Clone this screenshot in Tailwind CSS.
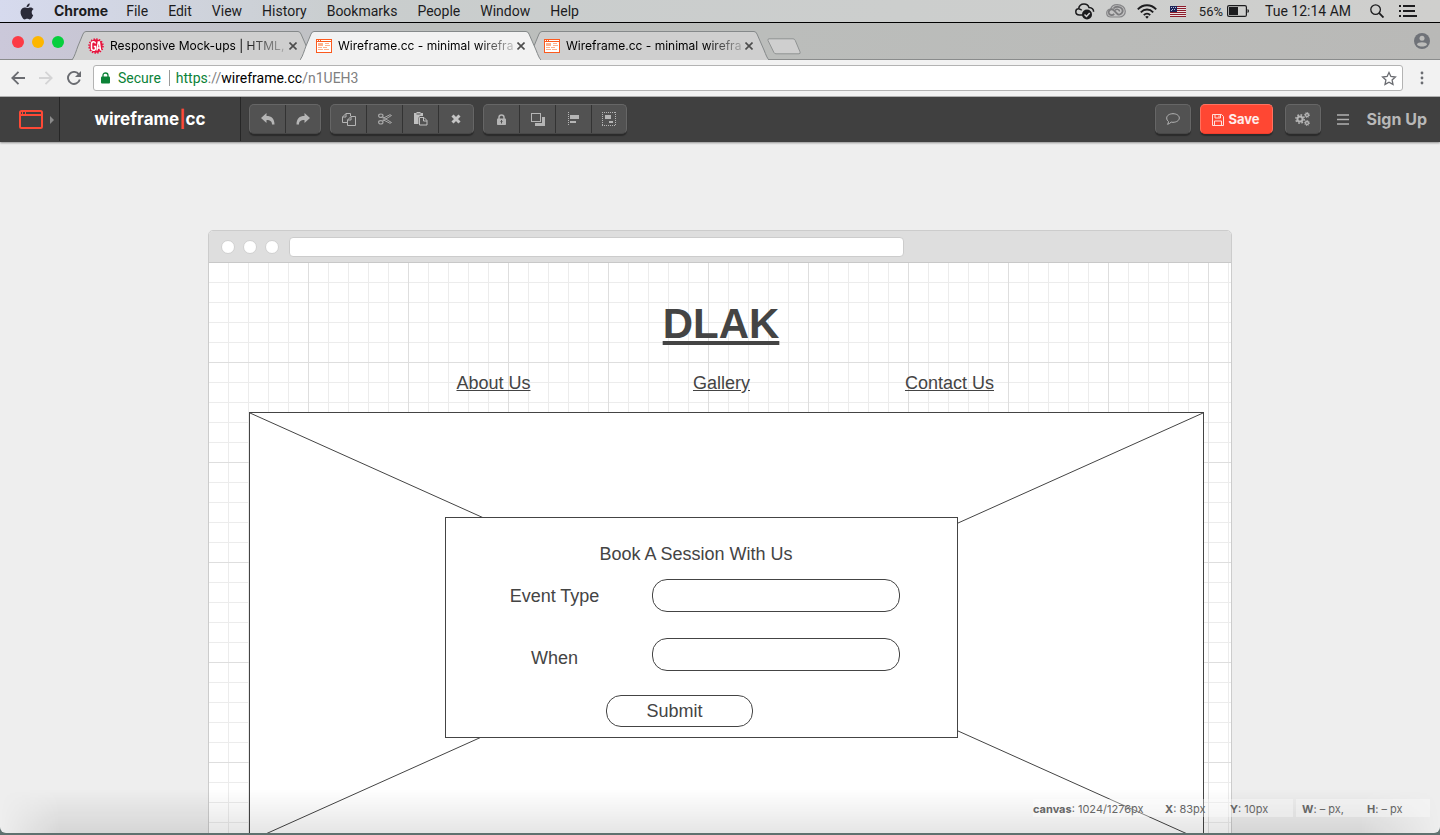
<!DOCTYPE html>
<html lang="en">
<head>
<meta charset="utf-8">
<title>Wireframe.cc - minimal wireframing tool</title>
<script src="https://cdn.jsdelivr.net/npm/@tailwindcss/browser@4"></script>
</head>
<body class="h-screen overflow-hidden bg-[#5f716f] font-['Roboto',sans-serif]">

<svg class="hidden" aria-hidden="true">
  <symbol id="wf" viewBox="0 0 16 14">
    <rect x=".5" y=".5" width="15" height="13" fill="#fff" stroke="#fb5a1e"/>
    <path d="M0 0h16v3H0z" fill="#fb5a1e"/><path d="M1 1h1v1H1zM3 1h1v1H3zM5 1h10v1H5z" fill="#fff"/>
    <path d="M2 4h5v3H2zM9 4h4v1H9zM9 6h5v1H9zM2 8h4v1H2zM7 8h4v1H7zM2 10h5v1H2zM8 10h5v1H8z" fill="#fdb08d"/>
  </symbol>
  <symbol id="close" viewBox="0 0 8 8"><path d="M.5 .5l7 7M7.500 .5l-7 7" fill="none" stroke="#4c4c4c" stroke-width="1.600"/></symbol>
  <symbol id="tab" viewBox="0 0 241 29"><path d="M0 29C3 25 4 20 6 15L11 3Q12 .5 14 .5H226Q228 .5 229 3L236 19C238 24 239 27 241 29" stroke="#85898a"/></symbol>
</svg>

<div class="flex h-[calc(100vh-2px)] flex-col overflow-hidden rounded-b-md bg-[#eee]">

  <!-- System menu bar -->
  <header class="flex h-[23px] shrink-0 items-center border-b border-black bg-linear-to-r from-[#d6daee] via-[#c9cdcd] via-25% to-[#cfcfcd] text-[14px] leading-none text-[#1c1c1e]">
    <nav aria-label="System menu" class="flex items-center gap-5 pl-5">
      <a href="#" aria-label="Apple"><svg width="14" height="17" viewBox="0 0 14 17" fill="#2a2a38"><path d="M9.700.500c.1 1.100-.3 2-.9 2.700-.6.700-1.500 1.200-2.300 1.100-.1-1 .3-1.900.9-2.600C8 1 9 .500 9.700.500zM13.200 12.300c-.400.900-.600 1.300-1.100 2.100-.7 1.100-1.500 2-2.500 2-.9 0-1.200-.6-2.400-.6s-1.600.6-2.400.6c-1 0-1.800-1-2.500-2C.400 11.600 0 8.200 1.300 6.400c.8-1.300 2.100-2 3.300-2 1.200 0 2 .7 3 .7s1.600-.7 3-.7c1 0 2.200.6 3 1.600-2.600 1.500-2.200 5.200-.4 6.300z"/></svg></a>
      <a href="#" class="-mr-0.5 font-['Inter',sans-serif] font-bold">Chrome</a>
      <a href="#">File</a>
      <a href="#">Edit</a>
      <a href="#">View</a>
      <a href="#">History</a>
      <a href="#">Bookmarks</a>
      <a href="#">People</a>
      <a href="#">Window</a>
      <a href="#">Help</a>
    </nav>
    <div class="ml-auto flex items-center pr-[23px]">
      <svg class="mr-[11px]" width="20" height="18" viewBox="0 0 20 18"><path d="M8 13H4.500C2 13 .8 11.400.8 9.800c0-1.600 1.200-3 2.800-3C4 4 6 1.900 9 1.900c2.600 0 4.400 1.500 5 3.600 2.800.2 4.600 2 4.600 4.200" fill="none" stroke="#1c1c1e" stroke-width="1.500"/><path d="M4 7c1.300 0 2 .5 2.700 1.300" fill="none" stroke="#1c1c1e" stroke-width="1.300"/><circle cx="12" cy="12.500" r="5" fill="#1c1c1e"/><path d="M9.500 12.500l2 2 3.200-3.600" fill="none" stroke="#d0d0d0" stroke-width="1.500"/></svg>
      <svg class="mr-[11px]" width="20" height="14" viewBox="0 0 20 14" fill="none"><path d="M5 13C2.300 13 .7 11.300.7 9S2.500 5 4.700 5C5.500 2.300 8 .7 11 .7c4.700 0 8.300 2.500 8.300 6.500 0 3.300-2.500 5.800-5.800 5.800z" fill="#c4c4c4" stroke="#858587" stroke-width="1.200"/><path d="M12 10.500L7.800 6.300C5.500 4 2.600 6 2.700 8.400c.2 2.700 3.500 3.700 5.500 1.500M7.500 4.500C9.500 2 14.500 2.200 16.300 5.200c1.400 3.200-1.800 6.500-4.800 4.900" stroke="#7c7c7e" stroke-width="1.800"/><path d="M9 6.500c1.500-2 4.800-1.200 4.500 1" stroke="#7c7c7e" stroke-width="1.500"/></svg>
      <svg class="mr-[13px]" width="20" height="15" viewBox="0 0 20 15" fill="none" stroke="#1c1c1e" stroke-width="1.900"><path d="M.8 5.300C6-.2 14-.2 19.200 5.300M3.800 8.300c3.600-3.700 8.800-3.700 12.400 0M6.800 11.200c1.900-1.900 4.500-1.900 6.400 0"/><path d="M8.200 12.700L10 14.800l1.800-2.100c-1.100-1-2.500-1-3.600 0z" fill="#1c1c1e" stroke="none"/></svg>
      <svg class="mr-[13px]" width="16" height="11" viewBox="0 0 16 11"><path d="M0 0h16v11H0z" fill="#e9e0e2"/><path d="M0 0h16v1H0zM0 2h16v1H0zM0 4h16v1H0zM0 6h16v1H0zM0 8h16v1H0zM0 10h16v1H0z" fill="#8b1c2b"/><path d="M0 0h7v6H0z" fill="#1d2559"/><path d="M1 1h1v1H1zM3 1h1v1H3zM5 1h1v1H5zM2 3h1v1H2zM4 3h1v1H4zM1 4h1v1H1z" fill="#b9bdd6"/></svg>
      <span class="mr-1 text-[13px]">56%</span>
      <svg class="mr-[15px]" width="23" height="12" viewBox="0 0 23 12"><rect x=".6" y=".6" width="18.800" height="10.800" rx="1.500" fill="none" stroke="#1c1c1e" stroke-width="1.200"/><path d="M2 2h9v8H2z" fill="#1c1c1e"/><path d="M20.500 4c2 .8 2 3.200 0 4z" fill="#1c1c1e"/></svg>
      <span class="mr-[19px]">Tue 12:14 AM</span>
      <button type="button" aria-label="Search" class="mr-[15px]"><svg width="14" height="14" viewBox="0 0 14 14" fill="none" stroke="#1c1c1e"><circle cx="5.600" cy="5.600" r="4.800" stroke-width="1.300"/><path d="M9.200 9.200l4.300 4.300" stroke-width="1.800"/></svg></button>
      <button type="button" aria-label="Notifications"><svg width="18" height="12" viewBox="0 0 18 12" fill="#1c1c1e"><path d="M0 0h2v2H0zM4 0h12v2H4zM0 5h2v2H0zM4 5h12v2H4zM0 10h2v2H0zM4 10h14v2H4z" /></svg></button>
    </div>
  </header>

  <!-- Tab strip -->
  <div class="flex h-[37px] shrink-0 items-end border-b border-[#8a8c8c] bg-linear-to-r from-[#cbc8da] via-[#bcbfbd] via-30% to-[#b9b9b7]">
    <div class="mb-[11px] ml-3 flex w-[60px] shrink-0 gap-2">
      <button type="button" aria-label="Close window" class="size-3 rounded-full bg-[#fc3b46]"></button>
      <button type="button" aria-label="Minimise window" class="size-3 rounded-full bg-[#fdb600]"></button>
      <button type="button" aria-label="Zoom window" class="size-3 rounded-full bg-[#06cf3d]"></button>
    </div>
    <div role="tablist" class="-mb-px flex font-['Inter',sans-serif] text-[12px] text-black">
      <div role="tab" aria-selected="false" class="relative flex h-[29px] w-[241px] items-center pr-4 pl-4">
        <svg class="absolute inset-0 size-full fill-[#cfcfcf]" aria-hidden="true"><use href="#tab"/></svg>
        <svg class="relative mr-1.5 shrink-0" width="16" height="16" viewBox="0 0 16 16"><circle cx="8" cy="8" r="6.700" fill="#e8123c"/><circle cx="8" cy="8" r="7" fill="none" stroke="#e8123c" stroke-width="1.600" stroke-dasharray="1.400 1.350"/><path d="M7.500 5.500C7.300 3 3.500 3 3.500 6v4c0 3 4 3 4 .5V8.500H5.800M9 12.500L10.300 4h1L12.600 12.500M9.500 10h2.600" fill="none" stroke="#fff" stroke-width="1.500"/></svg>
        <a href="#" class="relative shrink-0 whitespace-nowrap [mask-image:linear-gradient(to_right,black_75%,rgba(0,0,0,0.2))]">Responsive Mock-ups | HTML,</a>
        <button type="button" aria-label="Close tab" class="relative ml-auto"><svg width="8" height="8"><use href="#close"/></svg></button>
      </div>
      <div role="tab" aria-selected="true" class="relative z-10 -ml-[13px] flex h-[29px] w-[241px] items-center pr-4 pl-4">
        <svg class="absolute inset-0 size-full fill-[#f2f2f2]" aria-hidden="true"><use href="#tab"/></svg>
        <svg class="relative mr-1.5 shrink-0" width="16" height="14"><use href="#wf"/></svg>
        <a href="#" class="relative shrink-0 whitespace-nowrap [mask-image:linear-gradient(to_right,black_80%,rgba(0,0,0,0.2))]">Wireframe.cc - minimal wirefra</a>
        <button type="button" aria-label="Close tab" class="relative ml-auto"><svg width="8" height="8"><use href="#close"/></svg></button>
      </div>
      <div role="tab" aria-selected="false" class="relative -ml-[13px] flex h-[29px] w-[241px] items-center pr-4 pl-4">
        <svg class="absolute inset-0 size-full fill-[#cfcfcf]" aria-hidden="true"><use href="#tab"/></svg>
        <svg class="relative mr-1.5 shrink-0" width="16" height="14"><use href="#wf"/></svg>
        <a href="#" class="relative shrink-0 whitespace-nowrap [mask-image:linear-gradient(to_right,black_80%,rgba(0,0,0,0.2))]">Wireframe.cc - minimal wirefra</a>
        <button type="button" aria-label="Close tab" class="relative ml-auto"><svg width="8" height="8"><use href="#close"/></svg></button>
      </div>
    </div>
    <button type="button" aria-label="New tab" class="mb-1 -ml-0.5"><svg class="block" width="34" height="17" viewBox="0 0 34 17"><path d="M2 .8h24q1.500 0 2.200 1.500l4.800 11.500q.8 2-1 2H9q-1.500 0-2.200-1.500L1 2.500Q.5.800 2 .8z" fill="#cfcfcf" stroke="#909393"/></svg></button>
    <button type="button" aria-label="Profile" class="mr-2.5 mb-2.5 ml-auto"><svg class="block" width="16" height="16" viewBox="0 0 16 16"><circle cx="8" cy="8" r="8" fill="#6f7278"/><circle cx="8" cy="5.200" r="2.500" fill="#bcbcba"/><path d="M3 11.500C3 8.500 13 8.500 13 11.500 11.500 14.300 4.500 14.300 3 11.500z" fill="#bcbcba"/></svg></button>
  </div>

  <!-- Address bar -->
  <div class="flex h-[37px] shrink-0 items-center border-b border-[#b5b5b5] bg-[#f2f2f2] pl-[11px]">
    <button type="button" aria-label="Back" class="mr-3.5"><svg class="block" width="14" height="14" viewBox="0 0 14 14" fill="none" stroke="#6a6c71" stroke-width="1.800"><path d="M14 7H1.500M7.500.800L1.300 7l6.200 6.200"/></svg></button>
    <button type="button" aria-label="Forward" class="mr-3.5"><svg class="block" width="14" height="14" viewBox="0 0 14 14" fill="none" stroke="#d4d4d5" stroke-width="1.800"><path d="M0 7h12.500M6.500.800L12.700 7l-6.200 6.200"/></svg></button>
    <button type="button" aria-label="Reload" class="mr-3"><svg class="block" width="14" height="14" viewBox="0 0 14 14"><path d="M11.800 3.300A6 6 0 1 0 12.800 8.500" fill="none" stroke="#6a6c71" stroke-width="1.900"/><path d="M14 0v6H8z" fill="#6a6c71"/></svg></button>
    <div class="flex h-[26px] min-w-0 flex-1 items-center rounded-[3px] border border-[#b3b3b3] bg-white pr-[9px] pl-[7px] text-[14px]">
      <svg class="mr-2 shrink-0" width="9" height="12" viewBox="0 0 9 12"><path d="M2 5.500V3.300C2 .2 7 .2 7 3.300v2.200" fill="none" stroke="#0b8237" stroke-width="1.300"/><rect y="4.500" width="9" height="7" rx="1" fill="#0b8237"/></svg>
      <span class="text-[#0b8237]">Secure</span>
      <span class="mr-1.5 ml-2 h-4 w-px bg-[#9a9a9a]"></span>
      <div role="textbox" aria-label="Address" contenteditable="true" spellcheck="false" class="flex-1 whitespace-nowrap text-[#808080] outline-none"><span class="text-[#0b8237]">https</span>://<span class="text-black">wireframe.cc</span>/n1UEH3</div>
      <button type="button" aria-label="Bookmark" class="-mr-1"><svg class="block" width="16" height="15" viewBox="0 0 16 15"><path d="M8 1.500l1.900 4 4.500.5-3.300 3 .9 4.400L8 11.200l-4 2.200.9-4.400-3.300-3 4.500-.5z" fill="none" stroke="#6a6c71" stroke-width="1.300"/></svg></button>
    </div>
    <button type="button" aria-label="Browser menu" class="flex w-[37px] justify-center"><svg width="4" height="14" viewBox="0 0 4 14" fill="#6a6c71"><circle cx="2" cy="2" r="1.400"/><circle cx="2" cy="7" r="1.400"/><circle cx="2" cy="12" r="1.400"/></svg></button>
  </div>

  <!-- Editor toolbar -->
  <div class="z-10 flex h-[45px] shrink-0 items-center bg-[#404040] pb-px font-['Inter',sans-serif] shadow-[0_1px_2px_rgba(0,0,0,0.4)]">
    <button type="button" aria-label="Choose device" class="flex h-full w-[60px] items-center border-r border-[#262626] pl-[19px]">
      <svg width="24" height="19" viewBox="0 0 24 19"><rect x="1" y="1" width="22" height="17" rx="1.500" fill="none" stroke="#fe4936" stroke-width="2"/><path d="M1 5h22" stroke="#fe4936" stroke-width="2"/><path d="M3.500 2v2M6.500 2v2" stroke="#fe4936"/></svg>
      <svg class="mt-0.5 ml-[7px]" width="4" height="8" viewBox="0 0 4 8"><path d="M0 0l4 4-4 4z" fill="#8b8b8b"/></svg>
    </button>
    <a href="#" class="flex h-full w-[181px] items-center justify-center border-r border-[#262626] pt-0.5 text-[17px] font-bold text-white">wireframe<span class="text-[#fe4936]">|</span>cc</a>

    <div class="ml-2 flex h-[30px] divide-x divide-[#333] rounded-[5px] border border-[#666] border-b-[#484848] bg-[#525252] shadow-[0_2px_1px_#2b2b2b]">
      <button type="button" aria-label="Undo" class="flex w-9 items-center justify-center"><svg width="14" height="12" viewBox="0 0 14 12"><path d="M5.500 0v3c5 0 8 2.500 8 8.500h-2.500c0-3-1.500-4.500-5.500-4.500v3L0 5z" fill="#b5b5b5"/></svg></button>
      <button type="button" aria-label="Redo" class="flex w-[34px] items-center justify-center"><svg width="14" height="12" viewBox="0 0 14 12"><path d="M8.500 0v3c-5 0-8 2.500-8 8.500H3c0-3 1.500-4.500 5.500-4.500v3L14 5z" fill="#b5b5b5"/></svg></button>
    </div>
    <div class="ml-[9px] flex h-[30px] divide-x divide-[#333] rounded-[5px] border border-[#666] border-b-[#484848] bg-[#525252] shadow-[0_2px_1px_#2b2b2b]">
      <button type="button" aria-label="Copy" class="flex w-9 items-center justify-center"><svg width="14" height="13" viewBox="0 0 14 13" fill="none" stroke="#b5b5b5"><path d="M5 9.500H.5V4L4 .5h4.500V3M4 .5V4H.5M9 3.500h4.500v9h-8V7zM9 3.500V7H5.500"/></svg></button>
      <button type="button" aria-label="Cut" class="flex w-9 items-center justify-center"><svg width="14" height="12" viewBox="0 0 14 12" fill="none" stroke="#a8a8a8"><ellipse cx="2.800" cy="2.700" rx="2.200" ry="1.700" stroke-width="1.200"/><ellipse cx="2.800" cy="9.300" rx="2.200" ry="1.700" stroke-width="1.200"/><path d="M4.500 4l9 5.500-1.500.8L4.800 6.600M4.500 8l9-5.500-1.500-.8L4.800 5.400"/></svg></button>
      <button type="button" aria-label="Paste" class="flex w-9 items-center justify-center"><svg width="14" height="14" viewBox="0 0 14 14"><path d="M0 1h2.500V0h4v1H9v3H6L4.500 5.500V12H0z" fill="#c0c0c0"/><path d="M2.500 1.500h4v1h-4z" fill="#525252"/><path d="M5.500 5.500h4.500l3 3v4.500h-7.500z M9.500 5.500v3.500h3.500" fill="#525252" stroke="#c0c0c0"/></svg></button>
      <button type="button" aria-label="Delete" class="flex w-[34px] items-center justify-center"><svg width="10" height="10" viewBox="0 0 10 10"><path d="M1.500 1.500l7 7M8.500 1.500l-7 7" stroke="#c5c5c5" stroke-width="3"/></svg></button>
    </div>
    <div class="ml-[9px] flex h-[30px] divide-x divide-[#333] rounded-[5px] border border-[#666] border-b-[#484848] bg-[#525252] shadow-[0_2px_1px_#2b2b2b]">
      <button type="button" aria-label="Lock" class="flex w-9 items-center justify-center"><svg width="9" height="11" viewBox="0 0 9 11"><path d="M2 5V3.200C2 .2 7 .2 7 3.200V5" fill="none" stroke="#b5b5b5" stroke-width="1.500"/><rect y="4.500" width="9" height="6.500" rx=".8" fill="#b5b5b5"/><path d="M4 6h1v1h.5v1H5v1.500H4V8h-.5V7H4z" fill="#525252"/></svg></button>
      <button type="button" aria-label="Arrange" class="flex w-9 items-center justify-center"><svg width="14" height="13" viewBox="0 0 14 13"><path d="M11 4h3v9H4v-3h7z" fill="#b5b5b5"/><rect x=".5" y=".5" width="9" height="8" fill="none" stroke="#b5b5b5"/></svg></button>
      <button type="button" aria-label="Align" class="flex w-9 items-center justify-center"><svg width="12" height="14" viewBox="0 0 12 14"><path d="M.5 0v14" stroke="#b5b5b5" stroke-dasharray="1 1"/><path d="M2 3h9v4H2zM2 9h6v2H2z" fill="#b5b5b5"/></svg></button>
      <button type="button" aria-label="Group" class="flex w-[34px] items-center justify-center"><svg width="14" height="14" viewBox="0 0 14 14"><path d="M0 .5h14M0 13.500h14M.5 0v14M13.500 0v14" fill="none" stroke="#b5b5b5" stroke-dasharray="1 1"/><path d="M3 3h6v4H3zM7 9h4v2H7z" fill="#b5b5b5"/></svg></button>
    </div>

    <div class="ml-auto flex items-center pr-[13px]">
      <button type="button" aria-label="Comments" class="mr-[9px] flex h-[30px] w-9 items-center justify-center rounded-[5px] border border-[#666] border-b-[#484848] bg-[#525252] shadow-[0_2px_1px_#2b2b2b]"><svg width="14" height="12" viewBox="0 0 14 12"><path d="M7 .7c3.500 0 6.300 1.800 6.300 4.300S10.500 9.300 7 9.300c-.7 0-1.300 0-1.800-.2C4.200 10.200 3 11 1.500 11.300c.6-.8 1-1.600 1-2.700C1.300 7.700.7 6.500.7 5 .7 2.500 3.500.7 7 .7z" fill="none" stroke="#b5b5b5"/></svg></button>
      <button type="button" class="mr-3 flex h-[30px] w-[73px] items-center justify-center gap-1 rounded-[5px] border border-[#ff7260] border-b-[#f23d2c] bg-[#ff4733] pt-0.5 text-[13px] font-bold text-white/90 shadow-[0_2px_1px_#2b2b2b]"><svg width="12" height="12" viewBox="0 0 12 12" fill="none" stroke="#ffe0dc"><path d="M.5.500h9l2 2v9H.5zM3 .5v3.500h5.500V.5M2.500 11.500V7h7v4.500"/><path d="M6.500 1.500h1v2h-1z" fill="#ffe0dc" stroke="none"/></svg>Save</button>
      <button type="button" aria-label="Settings" class="mr-4 flex h-[30px] w-9 items-center justify-center rounded-[5px] border border-[#666] border-b-[#484848] bg-[#525252] shadow-[0_2px_1px_#2b2b2b]"><svg width="15" height="14" viewBox="0 0 15 14" fill="none" stroke="#b5b5b5"><circle cx="5" cy="7" r="2.600" stroke-width="2"/><circle cx="5" cy="7" r="4.200" stroke-width="1.500" stroke-dasharray="1.700 1.600"/><circle cx="12" cy="3" r="1.500" stroke-width="1.300"/><circle cx="12" cy="3" r="2.500" stroke-dasharray="1 .96"/><circle cx="12" cy="11" r="1.500" stroke-width="1.300"/><circle cx="12" cy="11" r="2.500" stroke-dasharray="1 .96"/></svg></button>
      <button type="button" aria-label="Menu" class="mr-[18px]"><svg class="block" width="12" height="11" viewBox="0 0 12 11"><path d="M0 1h12M0 5.500h12M0 10h12" stroke="#b0b0b0" stroke-width="1.600"/></svg></button>
      <a href="#" class="text-[16px] font-bold text-[#b8b8b8]">Sign Up</a>
    </div>
  </div>

  <!-- Workspace -->
  <main class="relative min-h-0 flex-1 overflow-hidden pt-[88px]">
    <div class="mx-auto w-full max-w-[1024px] rounded-t-[5px] border border-[#ccc] bg-white font-['Liberation_Sans',sans-serif] text-[18px] leading-5 text-[#444]">
      <div class="flex h-8 items-center rounded-t-[4px] border-b border-[#c8c8c8] bg-[#dedede] pl-3">
        <span class="mr-2 size-3.5 rounded-full border border-[#d0d0d0] bg-white"></span>
        <span class="mr-2 size-3.5 rounded-full border border-[#d0d0d0] bg-white"></span>
        <span class="mr-2.5 size-3.5 rounded-full border border-[#d0d0d0] bg-white"></span>
        <input aria-label="Mock address" class="h-5 w-[615px] rounded-[4px] border border-[#ccc] bg-white px-2 text-xs outline-none">
      </div>
      <div class="h-[1276px] bg-[linear-gradient(to_right,transparent_99px,#dedede_99px),linear-gradient(to_bottom,transparent_99px,#dedede_99px),linear-gradient(to_right,transparent_19px,#ececec_19px),linear-gradient(to_bottom,transparent_19px,#ececec_19px)] bg-[size:100px_100px,100px_100px,20px_20px,20px_20px] pt-[37px]">
        <h1 class="pl-0.5 text-center text-[42px] leading-[48px] font-bold underline">DLAK</h1>
        <nav aria-label="Mock navigation" class="mx-auto mt-[25px] grid max-w-[687px] grid-cols-3 pl-[3px] text-center">
          <a href="#" class="underline">About Us</a>
          <a href="#" class="underline">Gallery</a>
          <a href="#" class="underline">Contact Us</a>
        </nav>
        <section class="relative mt-[19px] mr-[27px] ml-10 h-[430px] border border-[#444] bg-white pt-[104px] pl-[195px]">
          <svg class="absolute inset-0 size-full" viewBox="0 0 953 428" preserveAspectRatio="none" aria-hidden="true"><path d="M0 0L953 428M953 0L0 428" stroke="#444" vector-effect="non-scaling-stroke"/></svg>
          <form class="relative h-[221px] w-[513px] border border-[#444] bg-white pt-[26px]">
            <h2 class="mr-[11px] text-center">Book A Session With Us</h2>
            <div class="mt-[15px] ml-[11px] grid grid-cols-[195px_248px] items-center gap-y-[26px] text-center">
              <label for="event">Event Type</label>
              <input id="event" class="h-[33px] rounded-[15px] border border-[#444] bg-white px-4 outline-none">
              <label for="when" class="pt-1.5">When</label>
              <input id="when" class="h-[33px] rounded-[15px] border border-[#444] bg-white px-4 outline-none">
            </div>
            <div class="mt-6 mr-[44px] flex justify-center">
              <button type="submit" class="h-8 w-[147px] rounded-[15px] border border-[#444] bg-white pr-2.5">Submit</button>
            </div>
          </form>
        </section>
      </div>
    </div>

    <!-- Status read-out over the workspace -->
    <div class="pointer-events-none absolute inset-x-0 bottom-0 h-11 bg-linear-to-b from-transparent to-black/10 [mask-image:linear-gradient(to_right,transparent,black_60px,black_calc(100%_-_80px),transparent)]"></div>
    <div class="absolute right-2.5 bottom-4 flex gap-[3px] font-['Inter',sans-serif] text-[11px] leading-4 text-[#666]">
      <div class="flex bg-white/35 pt-0.5">
        <span class="w-[132px]"><b>canvas</b>: 1024/1276px</span>
        <span class="w-[65px]"><b>X</b>: 83px</span>
        <span class="w-[63px]"><b>Y</b>: 10px</span>
      </div>
      <div class="flex bg-white/35 pt-0.5 pl-1.5">
        <span class="w-[65px]"><b>W</b>: – px,</span>
        <span class="w-[63px]"><b>H</b>: – px</span>
      </div>
    </div>
  </main>
</div>
</body>
</html>
